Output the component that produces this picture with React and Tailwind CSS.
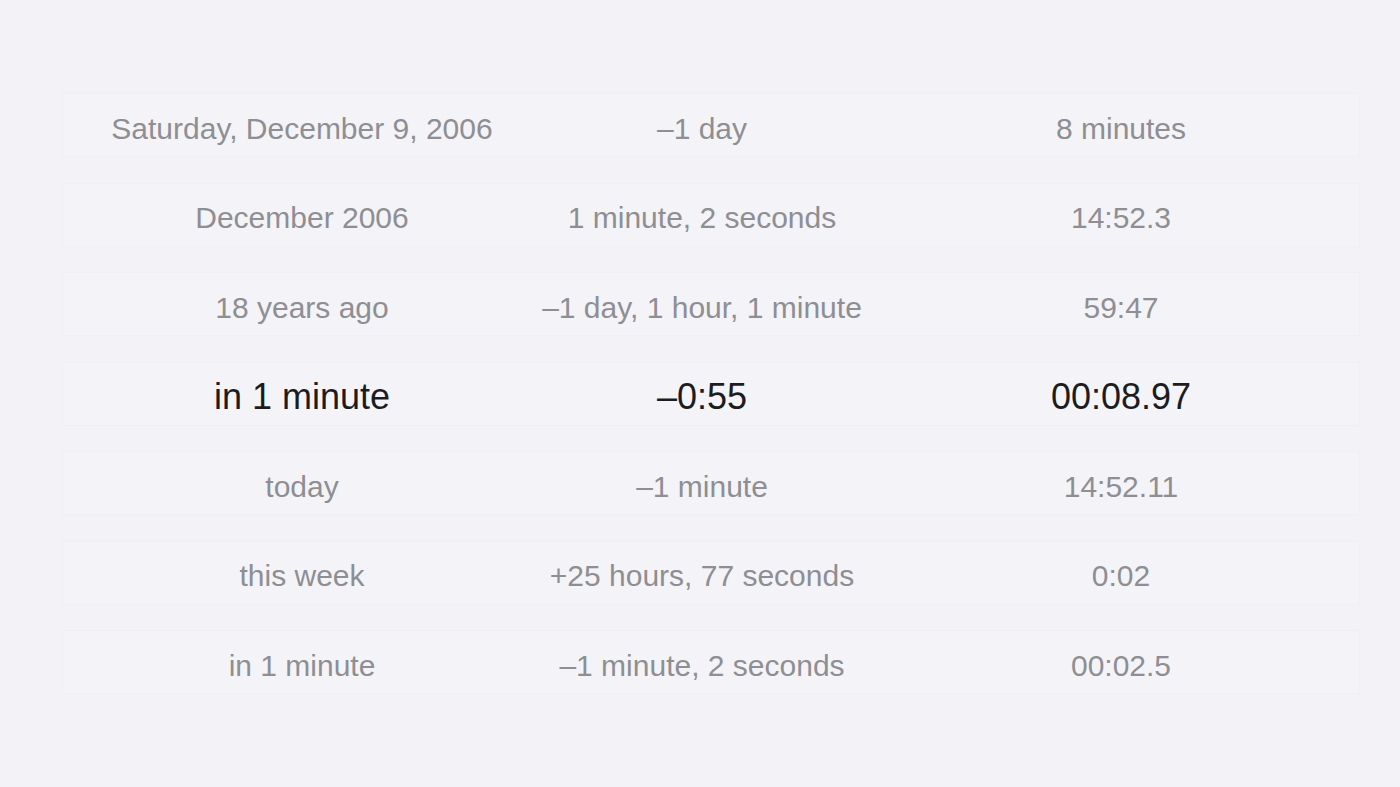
const rows = [
  ['Saturday, December 9, 2006', '–1 day', '8 minutes'],
  ['December 2006', '1 minute, 2 seconds', '14:52.3'],
  ['18 years ago', '–1 day, 1 hour, 1 minute', '59:47'],
  ['in 1 minute', '–0:55', '00:08.97', true],
  ['today', '–1 minute', '14:52.11'],
  ['this week', '+25 hours, 77 seconds', '0:02'],
  ['in 1 minute', '–1 minute, 2 seconds', '00:02.5'],
]

export default function App() {
  return (
    <div className="w-[1400px] h-[787px] bg-[#f2f2f7] overflow-hidden pt-[93px] pl-[62px]"
      style={{ fontFamily: '"Liberation Sans", Arial, sans-serif' }}>
      <div className="w-[1298px] flex flex-col gap-[25.5px]">
        {rows.map(([a, b, c, active], i) => (
          <div key={i}
            className={`h-16 flex items-center pl-[39px] pt-[6px] border border-[#f0f0f4] bg-[#f4f4f8] ${active ? 'text-[36px] text-[#1c1c1e]' : 'text-[30px] text-[#8e8e93]'}`}>
            <div className="w-[400px] text-center whitespace-nowrap">{a}</div>
            <div className="w-[400px] text-center whitespace-nowrap">{b}</div>
            <div className="w-[400px] ml-[19px] text-center whitespace-nowrap">{c}</div>
          </div>
        ))}
      </div>
    </div>
  )
}
